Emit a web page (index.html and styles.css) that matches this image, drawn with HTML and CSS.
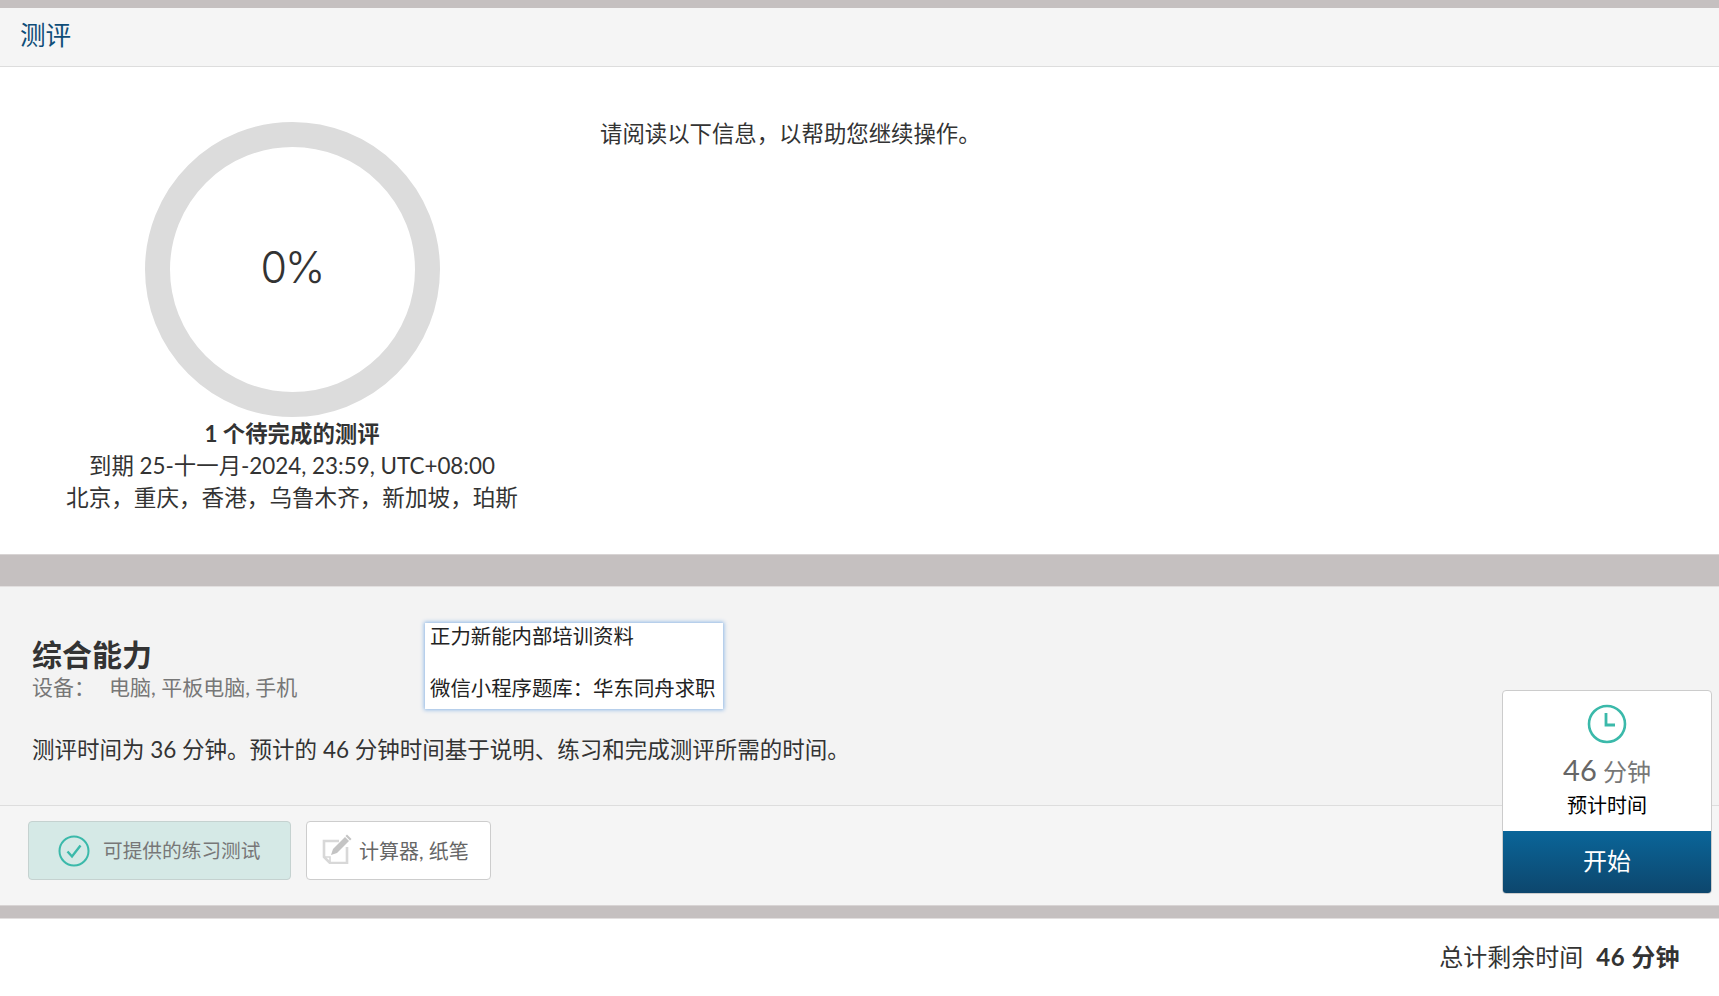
FILE: index.html
```html
<!DOCTYPE html>
<html lang="zh-CN">
<head>
<meta charset="utf-8">
<title>测评</title>
<link rel="stylesheet" href="styles.css">
</head>
<body>
<div class="top-strip"></div>
<header class="page-header"><h1 class="page-title">测评</h1></header>
<section class="overview">
  <div class="summary">
    <div class="ring"><span class="ring-value">0%</span></div>
    <p class="summary-title">1 个待完成的测评</p>
    <p class="summary-line">到期 25-十一月-2024, 23:59, UTC+08:00</p>
    <p class="summary-zones">北京，重庆，香港，乌鲁木齐，新加坡，珀斯</p>
  </div>
  <p class="notice">请阅读以下信息，以帮助您继续操作。</p>
</section>
<div class="gap-band"></div>
<section class="card">
  <div class="card-main">
    <h2 class="card-title">综合能力</h2>
    <p class="devices"><span class="devices-label">设备：</span><span>电脑, 平板电脑, 手机</span></p>
    <p class="card-desc">测评时间为 36 分钟。预计的 46 分钟时间基于说明、练习和完成测评所需的时间。</p>
  </div>
  <div class="chips">
    <div class="chip chip-practice">
      <svg class="chip-icon-check" viewBox="0 0 32 32" width="32" height="32" aria-hidden="true">
        <circle cx="16" cy="16" r="14.5" fill="none" stroke="#3bb9aa" stroke-width="2"/>
        <path d="M9.5 16.500l4.500 5L22.500 10.500" fill="none" stroke="#3bb9aa" stroke-width="2.400"/>
      </svg>
      <span>可提供的练习测试</span>
    </div>
    <div class="chip chip-tools">
      <svg class="chip-icon-note" viewBox="0 0 31 30" width="31" height="30" aria-hidden="true">
        <path d="M17 7H2v16l6 6h17V13" fill="none" stroke="#d8d8d8" stroke-width="2.600"/>
        <path d="M2 23h6v5" fill="none" stroke="#d8d8d8" stroke-width="1.600"/>
        <path d="M9 21l2-6L23 3l4 4L15 19z" fill="#c4c4c4"/>
        <path d="M25 0.500l4.500 4.500-1.500 1.500-4.500-4.500z" fill="#c4c4c4"/>
      </svg>
      <span>计算器, 纸笔</span>
    </div>
  </div>
  <div class="note-box">正力新能内部培训资料<br><br>微信小程序题库：华东同舟求职</div>
  <aside class="start-card">
    <div class="start-info">
      <svg class="clock" viewBox="0 0 40 40" width="40" height="40" aria-hidden="true">
        <circle cx="20" cy="20" r="18" fill="none" stroke="#3bb9aa" stroke-width="2.600"/>
        <path d="M19 9v12h9" fill="none" stroke="#3bb9aa" stroke-width="2.800"/>
      </svg>
      <div class="duration"><span class="duration-num">46</span> 分钟</div>
      <div class="duration-label">预计时间</div>
    </div>
    <div class="start-btn">开始</div>
  </aside>
</section>
<div class="gap-band gap-band-thin"></div>
<footer class="page-footer">
  <span>总计剩余时间</span><strong class="footer-total">46 分钟</strong>
</footer>
</body>
</html>
```
FILE: styles.css
```css
* { box-sizing: border-box; }
html, body { margin: 0; padding: 0; }
body {
  width: 1719px;
  height: 996px;
  overflow: hidden;
  background: #fff;
  color: #333;
  font-family: "Lato", "Noto Sans CJK SC", sans-serif;
  font-size: 22.4px;
  line-height: 32px;
}
p, h1, h2 { margin: 0; font-weight: normal; }

.top-strip { height: 8px; background: #c5c0c0; }
.page-header {
  height: 59px;
  padding: 0 20px 4px;
  display: flex;
  align-items: center;
  background: #f5f5f5;
  border-bottom: 1px solid #ddd;
}
.page-title { font-size: 25.6px; color: #0f4d78; }

.overview {
  height: 487px;
  display: flex;
  padding-top: 51px;
  background: #fff;
}
.summary {
  width: 584px;
  display: flex;
  flex-direction: column;
  align-items: center;
  padding-top: 4px;
}
.ring {
  width: 295px;
  height: 295px;
  margin-bottom: 1px;
  border: 25px solid #dcdcdc;
  border-radius: 50%;
  display: flex;
  align-items: center;
  justify-content: center;
  padding-bottom: 5px;
}
.ring-value {
  font-family: "Inter", sans-serif;
  font-size: 43px;
  font-weight: 300;
  letter-spacing: -2px;
  color: #333;
}
.summary-title { font-weight: 700; }
.summary-zones { font-size: 22.6px; }
.notice { margin-left: 16px; }

.gap-band {
  height: 33px;
  background: #c5c0c0;
  border-top: 1px solid #d8d4d4;
  border-bottom: 1px solid #e2dfdf;
}
.gap-band-thin { height: 14px; }

.card {
  position: relative;
  height: 318px;
  background: #f3f3f3;
}
.card-main {
  height: 218px;
  padding: 49px 32px 0;
}
.card-title {
  font-size: 30px;
  font-weight: 700;
  line-height: 36px;
}
.devices {
  display: flex;
  margin-top: 2px;
  font-size: 21px;
  line-height: 26px;
  color: #777;
}
.devices-label { width: 77px; }
.card-desc { margin-top: 34px; font-size: 22.5px; }

.chips {
  height: 100px;
  display: flex;
  gap: 15px;
  padding: 15px 28px 0;
  background: #f5f5f5;
  border-top: 1px solid #ddd;
}
.chip {
  height: 59px;
  display: flex;
  align-items: center;
  border: 1px solid #cdcdcd;
  border-radius: 4px;
}
.chip-practice {
  width: 263px;
  padding-left: 29px;
  gap: 13px;
  font-size: 19.700px;
  background: #d5e9e6;
  border-color: #c5d2d0;
  color: #777;
}
.chip-tools {
  width: 185px;
  padding-left: 15px;
  gap: 6px;
  font-size: 20px;
  background: #fff;
  color: #666;
}
.chip-icon-note { margin-bottom: 4px; }

.note-box {
  position: absolute;
  left: 425px;
  top: 36px;
  width: 298px;
  height: 86px;
  padding: 0 5px;
  font-size: 20.4px;
  line-height: 26px;
  background: #fff;
  box-shadow: 0 0 4px 1px #8fb8e6;
  color: #222;
  white-space: nowrap;
}

.start-card {
  position: absolute;
  left: 1502px;
  top: 103px;
  width: 210px;
  height: 204px;
  display: flex;
  flex-direction: column;
  background: #fff;
  border: 1px solid #ccc;
  border-radius: 4px;
  overflow: hidden;
}
.start-info {
  height: 140px;
  display: flex;
  flex-direction: column;
  align-items: center;
  padding-top: 13px;
}
.duration {
  margin-top: 8px;
  font-size: 24px;
  line-height: 36px;
  color: #777;
}
.duration-num { font-size: 29px; color: #666; }
.duration-label {
  margin-top: 1px;
  font-size: 20px;
  line-height: 28px;
  color: #000;
}
.start-btn {
  flex: 1;
  display: flex;
  align-items: center;
  justify-content: center;
  padding-bottom: 3px;
  font-size: 24px;
  color: #fff;
  background: linear-gradient(#0a6599, #0d466d);
}

.page-footer {
  display: flex;
  justify-content: flex-end;
  align-items: center;
  gap: 13px;
  height: 76px;
  padding-right: 39px;
  font-size: 24px;
}
.footer-total { font-weight: 700; letter-spacing: 0.4px; }
```
